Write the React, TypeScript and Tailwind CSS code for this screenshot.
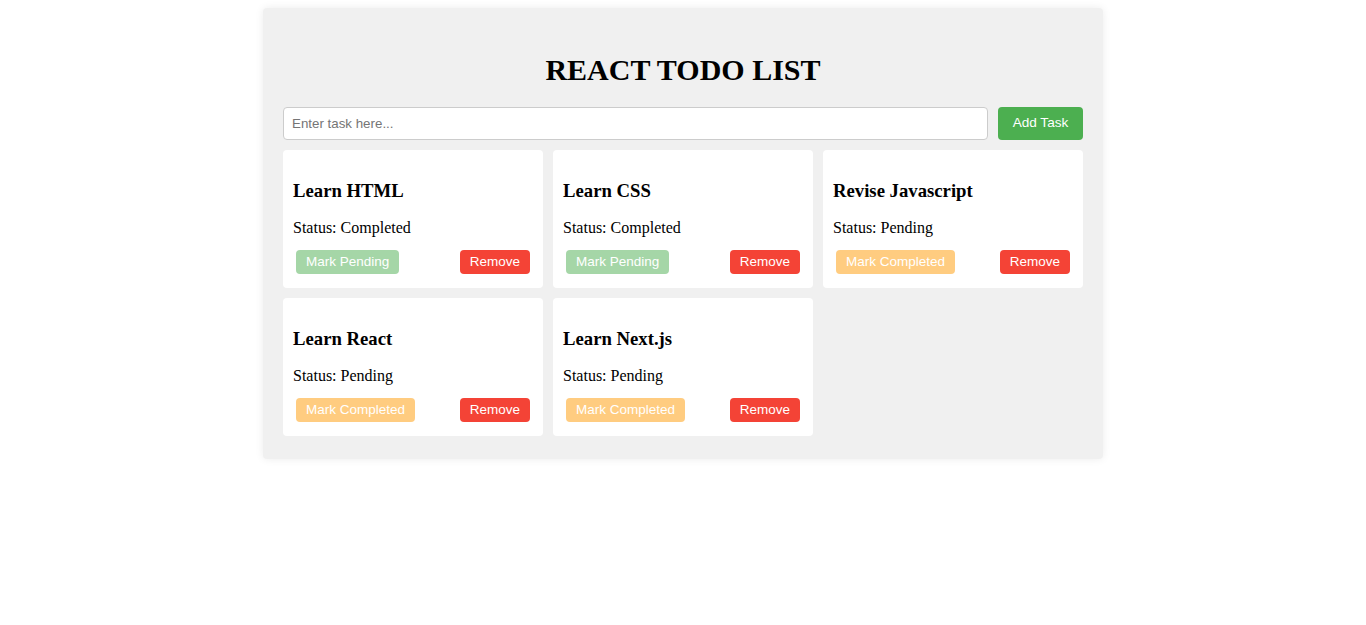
import { useState } from "react";

type Task = {
  id: number;
  title: string;
  completed: boolean;
};

const initialTasks: Task[] = [
  { id: 1, title: "Learn HTML", completed: true },
  { id: 2, title: "Learn CSS", completed: true },
  { id: 3, title: "Revise Javascript", completed: false },
  { id: 4, title: "Learn React", completed: false },
  { id: 5, title: "Learn Next.js", completed: false },
];

function TaskCard({
  task,
  onToggle,
  onRemove,
}: {
  task: Task;
  onToggle: () => void;
  onRemove: () => void;
}) {
  return (
    <div className="rounded-[4px] bg-white p-[10px]">
      <h3 className="mt-[20px] mb-[17px] text-[18.72px] font-bold leading-[22px]">
        {task.title}
      </h3>
      <p className="mb-[13px] text-[16px] leading-[18px]">
        Status: {task.completed ? "Completed" : "Pending"}
      </p>
      <div className="flex items-center justify-between px-[3px] pb-[4px]">
        <button
          onClick={onToggle}
          className={
            task.completed
              ? "h-[24px] rounded-[4px] bg-[#a5d6a7] px-[10px] font-['Liberation_Sans',Arial,sans-serif] text-[13.5px] text-white"
              : "h-[24px] rounded-[4px] bg-[#ffcc80] px-[10px] font-['Liberation_Sans',Arial,sans-serif] text-[13.5px] text-white"
          }
        >
          {task.completed ? "Mark Pending" : "Mark Completed"}
        </button>
        <button
          onClick={onRemove}
          className="h-[24px] rounded-[4px] bg-[#f44336] px-[10px] font-['Liberation_Sans',Arial,sans-serif] text-[13.5px] text-white"
        >
          Remove
        </button>
      </div>
    </div>
  );
}

export default function App() {
  const [tasks, setTasks] = useState<Task[]>(initialTasks);
  const [text, setText] = useState("");

  const addTask = () => {
    if (!text.trim()) return;
    setTasks([...tasks, { id: Date.now(), title: text.trim(), completed: false }]);
    setText("");
  };

  return (
    <div className="min-h-screen bg-white pt-[8px] font-['Liberation_Serif','Times_New_Roman',serif] text-black">
      <div className="mx-auto w-[840px] rounded-[4px] bg-[#f0f0f0] px-[20px] pt-[20px] pb-[23px] shadow-[0_0_8px_rgba(0,0,0,0.08)]">
        <h1 className="mt-[24px] mb-[20px] text-center text-[30px] font-bold leading-[35px]">
          REACT TODO LIST
        </h1>
        <div className="flex gap-[10px]">
          <input
            value={text}
            onChange={(e) => setText(e.target.value)}
            placeholder="Enter task here..."
            className="h-[33px] flex-1 rounded-[4px] border border-[#ccc] bg-white px-[8px] font-['Liberation_Sans',Arial,sans-serif] text-[13.33px] outline-none placeholder:text-[#757575]"
          />
          <button
            onClick={addTask}
            className="h-[33px] w-[85px] rounded-[4px] bg-[#4caf50] font-['Liberation_Sans',Arial,sans-serif] text-[13.6px] text-white"
          >
            Add Task
          </button>
        </div>
        <div className="mt-[10px] grid grid-cols-3 gap-[10px]">
          {tasks.map((task) => (
            <TaskCard
              key={task.id}
              task={task}
              onToggle={() =>
                setTasks(
                  tasks.map((t) => (t.id === task.id ? { ...t, completed: !t.completed } : t))
                )
              }
              onRemove={() => setTasks(tasks.filter((t) => t.id !== task.id))}
            />
          ))}
        </div>
      </div>
    </div>
  );
}
